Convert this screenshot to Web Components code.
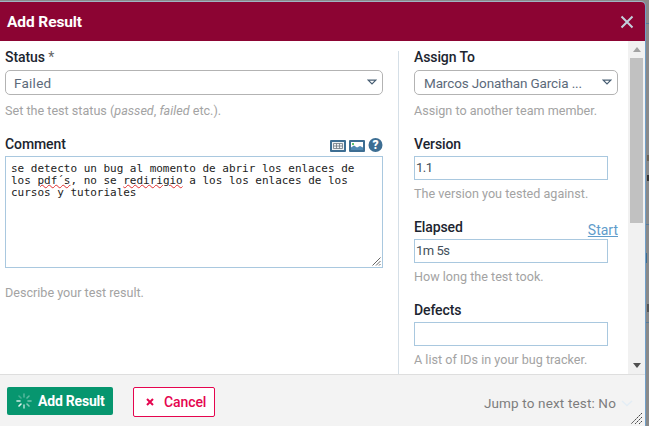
<!DOCTYPE html>
<html><head><meta charset="utf-8"><style>
html,body{margin:0;padding:0;height:426px;overflow:hidden}
body{font-family:Roboto,"Liberation Sans",sans-serif;background:
linear-gradient(#5d7a94,#5d7a94) 646px 23px/3px 1px no-repeat,
linear-gradient(#6b6256,#6b6256) 647px 155px/2px 6px no-repeat,
linear-gradient(#333,#333) 647px 175px/2px 6px no-repeat,
linear-gradient(#5d7a94,#5d7a94) 646px 224px/3px 1px no-repeat,
linear-gradient(#3f6d90,#3f6d90) 646px 253px/1px 10px no-repeat,
linear-gradient(#555,#555) 647px 304px/2px 8px no-repeat,
linear-gradient(#5d7a94,#5d7a94) 646px 322px/3px 1px no-repeat,
#8a8a8a}
</style></head><body>
<template id="t-field"><style>
:host{display:block}
.head{display:flex;align-items:flex-end;justify-content:space-between;height:16px;margin-bottom:4px}
.lab{font-size:14px;font-weight:500;color:#1c2530;letter-spacing:-.1px;line-height:16px}
.hint{font-size:12.6px;color:#a3a3a3;line-height:15px;margin-top:var(--hm,8px)}
</style><div class="head"><span class="lab"><slot name="label"></slot></span><slot name="aside"></slot></div><slot></slot><div class="hint"><slot name="hint"></slot></div></template>

<template id="t-select"><style>
:host{display:flex;align-items:center;height:25px;margin-top:5px;box-sizing:border-box;border:1px solid #b3b3b3;border-radius:5px;padding:0 5px 0 8px;font-size:13.5px;color:#5c6a7a;background:#fff}
span{flex:1;letter-spacing:var(--ls,.25px);white-space:nowrap}
svg{display:block}
</style><span><slot></slot></span><svg width="10" height="7" viewBox="0 0 10 7"><path d="M1.2 1.2h7.6L5 5z" fill="none" stroke="#4a6075" stroke-width="1.2"/></svg></template>

<template id="t-input"><style>
:host{display:block;width:194px;height:24px;box-sizing:border-box;border:1px solid #a9c8df;padding:0 1px;font-size:13px;line-height:22px;letter-spacing:-.5px;color:#44505c;background:#fff}
</style><slot></slot></template>

<template id="t-comment"><style>
:host{display:block;position:relative;height:112px;box-sizing:border-box;border:1px solid #a9c8df;background:#fff;padding:6px 5px;font:11px/12px "DejaVu Sans Mono",monospace;letter-spacing:-.02px;color:#222;white-space:pre}
svg{position:absolute;right:1px;bottom:1px}
</style><slot></slot><svg width="10" height="10" viewBox="0 0 10 10"><path d="M9.5 1.5L1.5 9.5M9.5 5L5 9.5M9.5 8L8 9.5" stroke="#666" fill="none"/></svg></template>

<template id="t-scroll"><style>
:host{display:flex;flex-direction:column;align-items:center;width:17px;background:#f1f1f1;height:100%;flex:none}
.a{height:17px;display:flex;align-items:center;justify-content:center;flex:none}
.th{width:13px;height:165px;background:#c1c1c1;flex:none}
.sp{flex:1}
</style><div class="a"><svg width="8" height="5"><path d="M4 0l4 5H0z" fill="#a3a3a3"/></svg></div><div class="th"></div><div class="sp"></div><div class="a"><svg width="8" height="5"><path d="M0 0h8L4 5z" fill="#505050"/></svg></div></template>

<template id="t-button"><style>
:host{display:inline-flex;align-items:center;box-sizing:border-box;font-size:14px;font-weight:500;border-radius:2px}
:host([kind=ok]){width:106px;height:28px;background:#07966f;color:#fff;padding-left:9px;gap:6px;font-weight:700;letter-spacing:-.2px}
:host([kind=no]){width:82px;height:30px;border:1px solid #e5054f;background:#fff;color:#e5054f;padding-left:12px;gap:10px;letter-spacing:-.1px;margin-left:20px}
::slotted(svg){display:block;flex:none}
</style><slot name="icon"></slot><slot></slot></template>

<template id="t-dialog"><style>
:host{display:flex;flex-direction:column;width:645px;height:424px;margin-top:2px;background:#fff;border-radius:0 4px 0 0;overflow:hidden;position:relative;box-shadow:1px 0 0 #6f9fc9,0 -1px 0 #9fb4c4}
header{flex:none;height:39px;background:#8c0433;color:#fff;display:flex;align-items:center;justify-content:space-between;padding:0 11px 0 7px;font-size:15.5px;font-weight:700;letter-spacing:-.1px}
.body{flex:1;min-height:0;display:flex}
.content{flex:1;min-width:0;display:flex;box-sizing:border-box;overflow:hidden}
.left{width:378px;margin:8px 0 0 5px;flex:none}
.right{flex:1;margin:10px 10px 0 15px;border-left:1px solid #d5dfe7;padding-left:15px;box-sizing:border-box;display:flex;flex-direction:column}
footer{flex:none;height:52px;box-sizing:border-box;border-top:1px solid #dedede;background:#f3f3f3;display:flex;align-items:flex-start;padding:12px 0 0 7px;position:relative}
.jump{margin-left:auto;margin-right:29px;font-size:13.5px;color:#7d7d7d;letter-spacing:.15px;line-height:16px;margin-top:8px;position:relative}
.chev{position:absolute;left:calc(100% + 5px);top:5px}
.grip{position:absolute;right:2px;bottom:1px}
</style>
<header><span><slot name="title"></slot></span><svg width="14" height="14" viewBox="0 0 14 14"><path d="M1.5 1.5l11 11M12.5 1.5l-11 11" stroke="#c3d0dc" stroke-width="2"/></svg></header>
<div class="body"><div class="content"><div class="left"><slot name="left"></slot></div><div class="right"><slot name="right"></slot></div></div><slot name="scroll"></slot></div>
<footer><slot name="buttons"></slot><span class="jump"><slot name="jump"></slot><svg class="chev" width="12" height="7" viewBox="0 0 12 7"><path d="M1 1l5 4.5L11 1" fill="none" stroke="#e3edf5" stroke-width="1.5"/></svg></span>
<svg class="grip" width="13" height="13" viewBox="0 0 13 13"><path d="M12 1L1 12M12 5L5 12M12 9L9 12" stroke="#444" fill="none" stroke-dasharray="2 .6"/></svg></footer></template>

<script>
function def(n,t){customElements.define(n,class extends HTMLElement{constructor(){super();this.attachShadow({mode:'open'}).appendChild(document.getElementById(t).content.cloneNode(true))}})}
def('x-field','t-field');def('x-select','t-select');def('x-input','t-input');def('x-comment','t-comment');def('x-scroll','t-scroll');def('x-button','t-button');def('x-dialog','t-dialog');
</script>

<x-dialog>
<span slot="title">Add Result</span>
<div slot="left" style="display:flex;flex-direction:column;gap:18px">
<x-field><span slot="label">Status <span style="font-weight:400;color:#666">*</span></span><x-select>Failed</x-select><span slot="hint">Set the test status (<i>passed</i>, <i>failed</i> etc.).</span></x-field>
<x-field style="--hm:17px"><span slot="label">Comment</span>
<span slot="aside" style="display:flex;gap:3px;align-items:flex-end">
<svg width="16" height="12" viewBox="0 0 16 12"><rect width="16" height="12" rx="1" fill="#3d6e93"/><rect x="2" y="2" width="12" height="8" fill="#eef2f5"/><path d="M3.5 3.5h9v5h-9zM3.5 6h9M6.5 3.5v5M9.5 3.5v5" fill="none" stroke="#6d7780" stroke-width=".8"/></svg>
<svg width="16" height="12" viewBox="0 0 16 12"><rect width="16" height="12" rx="1" fill="#3d6e93"/><rect x="2" y="2" width="12" height="8" fill="#fff"/><path d="M2 10V7.5l3-2 3 2 3-1.5 3 1.5V10z" fill="#4f8ab5"/><rect x="3" y="3" width="2" height="2" fill="#5cc46a"/></svg>
<svg width="15" height="14" viewBox="0 0 15 14" style="margin-left:0"><circle cx="7.5" cy="7" r="7" fill="#3d6e93"/><text x="7.5" y="11.2" text-anchor="middle" font-family="Roboto" font-weight="900" font-size="12" fill="#fff">?</text></svg>
</span>
<x-comment>se detecto un bug al momento de abrir los enlaces de
los <span style="text-decoration:underline wavy #e03030 1px;text-underline-offset:0">pdf´s</span>, no se <span style="text-decoration:underline wavy #e03030 1px;text-underline-offset:0">redirigio</span> a los los enlaces de los
cursos y tutoriales</x-comment><span slot="hint">Describe your test result.</span></x-field>
</div>
<div slot="right" style="display:flex;flex-direction:column;gap:18px;margin-top:-2px;--hm:6px">
<x-field style="--hm:8px"><span slot="label">Assign To</span><x-select style="--ls:-.13px;padding-left:9px">Marcos Jonathan Garcia ...</x-select><span slot="hint">Assign to another team member.</span></x-field>
<x-field><span slot="label">Version</span><x-input>1.1</x-input><span slot="hint">The version you tested against.</span></x-field>
<x-field><span slot="label">Elapsed</span><a slot="aside" style="font-size:14px;color:#5f9ccb;text-decoration:underline;line-height:15px;margin-bottom:-3px">Start</a><x-input>1m 5s</x-input><span slot="hint">How long the test took.</span></x-field>
<x-field><span slot="label">Defects</span><x-input></x-input><span slot="hint">A list of IDs in your bug tracker.</span></x-field>
</div>
<x-scroll slot="scroll"></x-scroll>
<x-button slot="buttons" kind="ok"><svg slot="icon" width="16" height="16" viewBox="0 0 16 16" stroke-width="1.6" stroke-linecap="round"><g stroke="#fff"><path d="M8 1v3" opacity=".3"/><path d="M13 3l-2 2" opacity=".35"/><path d="M15 8h-3" opacity=".45"/><path d="M13 13l-2-2" opacity=".5"/><path d="M8 15v-3" opacity=".65"/><path d="M3 13l2-2" opacity=".9"/><path d="M1 8h3" opacity=".8"/><path d="M3 3l2 2" opacity=".25"/></g></svg>Add Result</x-button>
<x-button slot="buttons" kind="no"><svg slot="icon" width="8" height="8" viewBox="0 0 8 8"><path d="M1 1l6 6M7 1L1 7" stroke="#e5054f" stroke-width="2"/></svg>Cancel</x-button>
<span slot="jump">Jump to next test: No</span>
</x-dialog>
</body></html>
